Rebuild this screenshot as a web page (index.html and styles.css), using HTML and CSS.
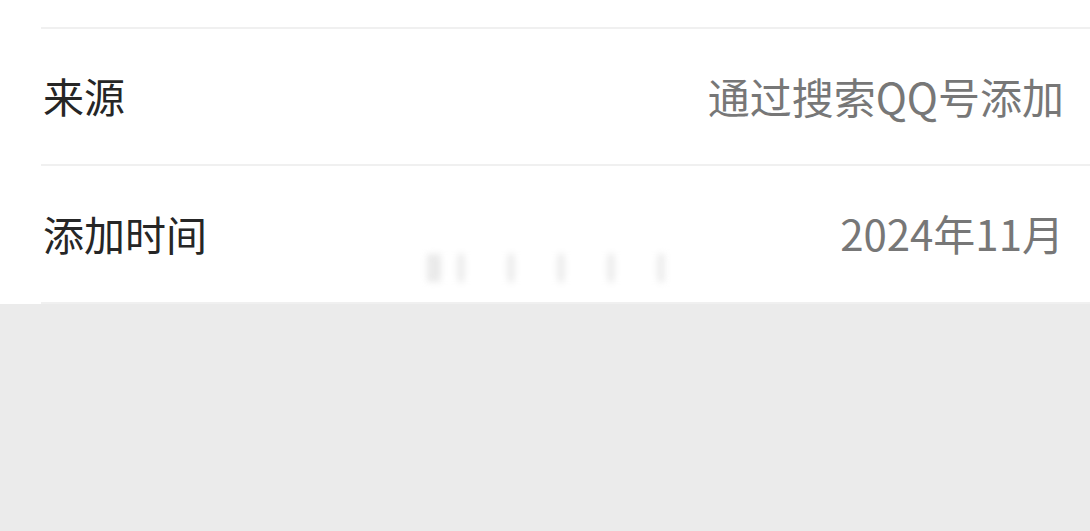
FILE: index.html
```html
<html>

<head>
    <link rel="stylesheet" href="styles.css">
</head>

<body>
    <div class="info-list">
        <div class="info-row info-row-cut"></div>
        <div class="info-row">
            <span class="info-label">来源</span>
            <span class="info-value">通过搜索QQ号添加</span>
        </div>
        <div class="info-row info-row-last">
            <span class="info-label">添加时间</span>
            <span class="info-smudge"></span>
            <span class="info-value">2024年11月</span>
        </div>
    </div>
</body>

</html>
```

FILE: styles.css
```css
* {
    box-sizing: border-box;
}

body {
    margin: 0;
    background: #ebebeb;
    font-family: 'Noto Sans CJK SC', 'Noto Sans', sans-serif;
}

.info-list {
    background: #fff;
    padding-left: 41px;
}

.info-row {
    display: flex;
    align-items: center;
    justify-content: space-between;
    height: 137px;
    padding-right: 26px;
    border-bottom: 2px solid #f0f0f0;
    position: relative;
}

.info-row-cut {
    height: 29px;
}

.info-row-last {
    height: 138px;
}

.info-label {
    font-size: 41px;
    color: #262626;
    padding-left: 2px;
    margin-top: -3px;
}

.info-value {
    font-size: 42px;
    color: #777;
    margin-top: -3px;
}

/* faded leftover of a hidden tag */
.info-smudge {
    position: absolute;
    left: 386px;
    top: 88px;
    width: 240px;
    height: 28px;
    background:
        linear-gradient(90deg, #dcdcdc 0 14px, transparent 14px),
        repeating-linear-gradient(90deg, #fff 0 30px, #e2e2e2 30px 38px, #fff 38px 50px);
    filter: blur(3px);
    opacity: .6;
}
```
